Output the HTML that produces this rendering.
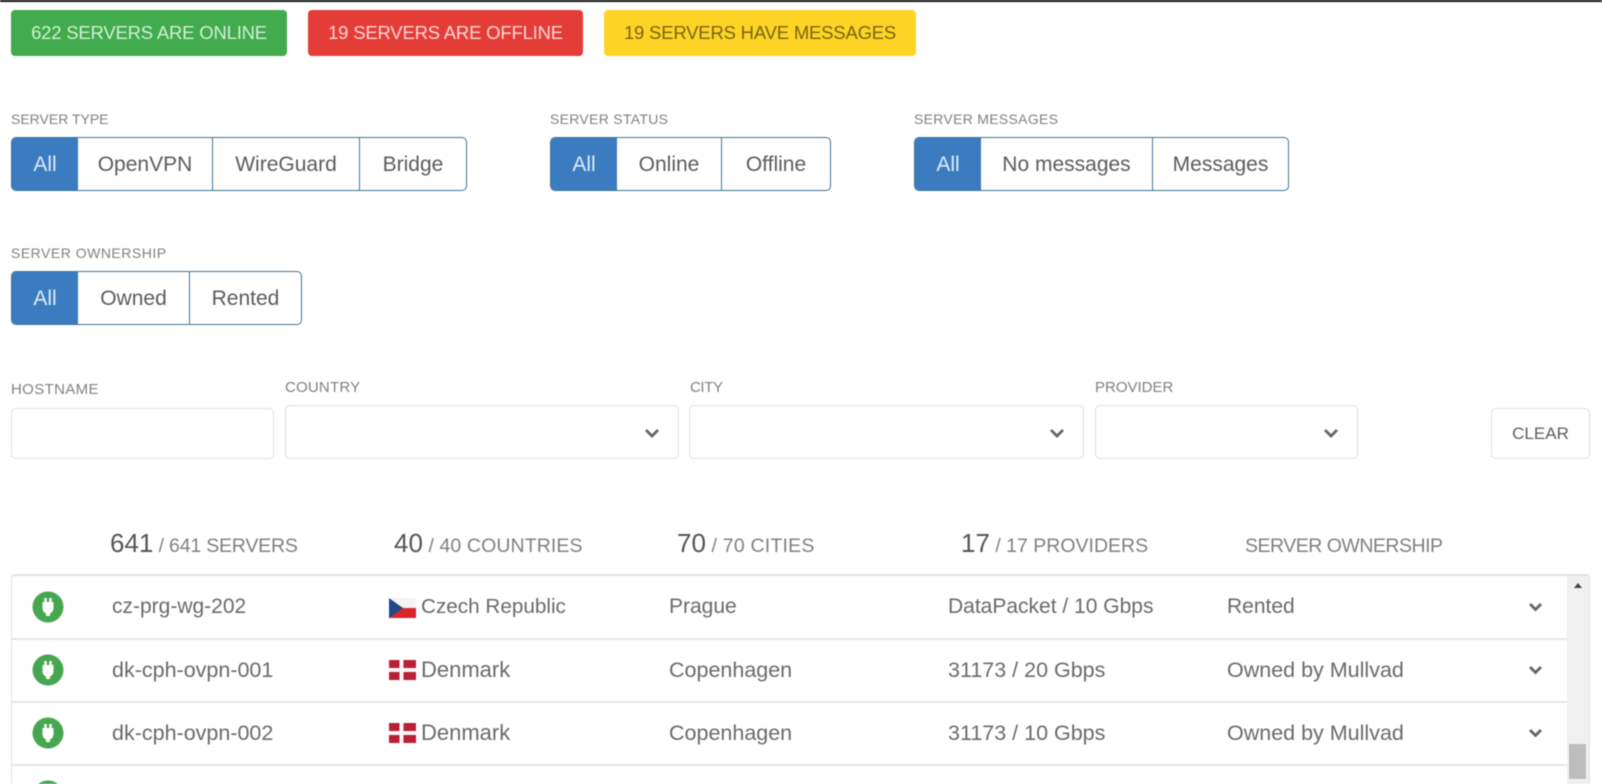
<!DOCTYPE html>
<html>
<head>
<meta charset="utf-8">
<style>
html,body{margin:0;padding:0;background:#fff;}
body{position:relative;width:1602px;height:784px;overflow:hidden;font-family:"Liberation Sans",sans-serif;color:#555;}
#w{position:absolute;left:0;top:0;width:1602px;height:784px;overflow:hidden;filter:blur(.5px);}
.a{position:absolute;white-space:nowrap;}
.b{position:absolute;top:10px;height:46px;line-height:46px;border-radius:4px;text-align:center;font-size:18.5px;letter-spacing:-.2px;}
.l{position:absolute;white-space:nowrap;font-size:14px;color:#808080;line-height:18px;}
.g{position:absolute;height:52px;border:1px solid #3f7496;border-radius:5px;box-sizing:content-box;}
.s{position:absolute;top:0;height:52px;line-height:54px;text-align:center;font-size:21px;color:#5c5c5c;border-right:1px solid #3f7496;box-sizing:border-box;}
.s:last-child{border-right:none;}
.s.on{background:#3b7cc0;color:#dfeaf5;border-radius:4px 0 0 4px;border-right:none;}
.i{position:absolute;border:1.5px solid #e0e0e0;border-radius:5px;box-sizing:border-box;background:#fff;}
.st{position:absolute;white-space:nowrap;font-size:19.5px;letter-spacing:-.2px;color:#808080;line-height:26px;}
.st b{font-weight:normal;font-size:26px;letter-spacing:0;color:#555;}
.t{position:absolute;white-space:nowrap;font-size:21.5px;line-height:26px;color:#6a6a6a;}
.r{position:absolute;left:12px;width:1555px;height:1.5px;background:#e6e6e6;}
svg{position:absolute;}
</style>
</head>
<body>
<div id="w">
<div class="a" style="left:0;top:0;width:1602px;height:2px;background:#111"></div>

<div class="b" style="left:11px;width:276px;background:#41ab4d;color:#d3efd5">622 SERVERS ARE ONLINE</div>
<div class="b" style="left:308px;width:275px;background:#e43d38;color:#fbd5d3">19 SERVERS ARE OFFLINE</div>
<div class="b" style="left:604px;width:312px;background:#fdd426;color:#7a6510">19 SERVERS HAVE MESSAGES</div>

<div class="l" style="left:11px;top:110px">SERVER TYPE</div>
<div class="g" style="left:11px;top:137px;width:454px">
<div class="s on" style="left:0;width:66px">All</div>
<div class="s" style="left:66px;width:135px">OpenVPN</div>
<div class="s" style="left:201px;width:147px">WireGuard</div>
<div class="s" style="left:348px;width:106px">Bridge</div>
</div>

<div class="l" style="left:550px;top:110px;letter-spacing:.3px">SERVER STATUS</div>
<div class="g" style="left:550px;top:137px;width:279px">
<div class="s on" style="left:0;width:66px">All</div>
<div class="s" style="left:66px;width:105px">Online</div>
<div class="s" style="left:171px;width:108px">Offline</div>
</div>

<div class="l" style="left:914px;top:110px;letter-spacing:.3px">SERVER MESSAGES</div>
<div class="g" style="left:914px;top:137px;width:373px">
<div class="s on" style="left:0;width:66px">All</div>
<div class="s" style="left:66px;width:172px">No messages</div>
<div class="s" style="left:238px;width:135px">Messages</div>
</div>

<div class="l" style="left:11px;top:244px;letter-spacing:.5px">SERVER OWNERSHIP</div>
<div class="g" style="left:11px;top:271px;width:289px">
<div class="s on" style="left:0;width:66px">All</div>
<div class="s" style="left:66px;width:112px">Owned</div>
<div class="s" style="left:178px;width:111px">Rented</div>
</div>

<div class="l" style="left:11px;top:381px;font-size:15px;letter-spacing:.35px">HOSTNAME</div>
<div class="l" style="left:285px;top:379px;font-size:15px;letter-spacing:.2px">COUNTRY</div>
<div class="l" style="left:690px;top:379px;font-size:15px;letter-spacing:-.4px">CITY</div>
<div class="l" style="left:1095px;top:379px;font-size:15px">PROVIDER</div>

<div class="i" style="left:11px;top:408px;width:263px;height:51px"></div>
<div class="i" style="left:285px;top:405px;width:394px;height:54px"></div>
<div class="i" style="left:689px;top:405px;width:395px;height:54px"></div>
<div class="i" style="left:1095px;top:405px;width:263px;height:54px"></div>
<div class="i" style="left:1491px;top:408px;width:99px;height:51px;text-align:center;line-height:50px;font-size:17px;color:#5e5e5e">CLEAR</div>

<svg style="left:644px;top:428px" width="16" height="11" viewBox="0 0 16 11"><path d="M2 2l6 6 6-6" fill="none" stroke="#666" stroke-width="2.8"/></svg>
<svg style="left:1049px;top:428px" width="16" height="11" viewBox="0 0 16 11"><path d="M2 2l6 6 6-6" fill="none" stroke="#666" stroke-width="2.8"/></svg>
<svg style="left:1323px;top:428px" width="16" height="11" viewBox="0 0 16 11"><path d="M2 2l6 6 6-6" fill="none" stroke="#666" stroke-width="2.8"/></svg>

<div class="st" style="left:110px;top:530px"><b>641</b> / 641 SERVERS</div>
<div class="st" style="left:394px;top:530px;letter-spacing:.1px"><b>40</b> / 40 COUNTRIES</div>
<div class="st" style="left:677px;top:530px;letter-spacing:.2px"><b>70</b> / 70 CITIES</div>
<div class="st" style="left:961px;top:530px;letter-spacing:0"><b>17</b> / 17 PROVIDERS</div>
<div class="st" style="left:1245px;top:533px;letter-spacing:-.5px">SERVER OWNERSHIP</div>

<div class="a" style="left:11px;top:574px;width:1579px;height:210px;border:1.5px solid #e2e2e2;border-bottom:none;border-radius:4px 4px 0 0;box-sizing:border-box;border-top-width:2px"></div>
<div class="a" style="left:1567px;top:576px;width:22px;height:208px;background:#f0f0f0"></div>
<div class="a" style="left:1569px;top:744px;width:17px;height:35px;background:#bdbdbd"></div>
<svg style="left:1572px;top:582px" width="12" height="8" viewBox="0 0 12 8"><path d="M6 1l4 5H2z" fill="#444"/></svg>

<div class="r" style="top:638px"></div>
<div class="r" style="top:701px"></div>
<div class="r" style="top:764px"></div>

<!-- row icons -->
<svg style="left:32px;top:591px" width="32" height="32" viewBox="0 0 32 32"><circle cx="16" cy="16" r="15.5" fill="#47a650"/><path d="M10.5 11h11v6c0 3-2 5-3.5 5.5V25h-4v-2.5C12.500 22 10.500 20 10.500 17z" fill="#fff"/><path d="M13.500 7v5M18.500 7v5" stroke="#fff" stroke-width="2.4"/></svg>
<svg style="left:32px;top:654px" width="32" height="32" viewBox="0 0 32 32"><circle cx="16" cy="16" r="15.5" fill="#47a650"/><path d="M10.5 11h11v6c0 3-2 5-3.5 5.5V25h-4v-2.5C12.500 22 10.500 20 10.500 17z" fill="#fff"/><path d="M13.500 7v5M18.500 7v5" stroke="#fff" stroke-width="2.4"/></svg>
<svg style="left:32px;top:717px" width="32" height="32" viewBox="0 0 32 32"><circle cx="16" cy="16" r="15.5" fill="#47a650"/><path d="M10.5 11h11v6c0 3-2 5-3.5 5.5V25h-4v-2.5C12.500 22 10.500 20 10.500 17z" fill="#fff"/><path d="M13.500 7v5M18.500 7v5" stroke="#fff" stroke-width="2.4"/></svg>
<svg style="left:32px;top:780px" width="32" height="32" viewBox="0 0 32 32"><circle cx="16" cy="16" r="15.5" fill="#47a650"/></svg>

<!-- flags -->
<svg style="left:389px;top:598px" width="27" height="20" viewBox="0 0 27 20"><rect width="27" height="10" fill="#f4f4f4"/><rect y="10" width="27" height="10" fill="#d7262c"/><path d="M0 0l14 10L0 20z" fill="#1d4a86"/></svg>
<svg style="left:389px;top:660px" width="27" height="20" viewBox="0 0 27 20"><rect width="27" height="20" fill="#b92035"/><rect x="10.5" width="4" height="20" fill="#f6f6f6"/><rect y="8" width="27" height="4" fill="#f6f6f6"/></svg>
<svg style="left:389px;top:723px" width="27" height="20" viewBox="0 0 27 20"><rect width="27" height="20" fill="#b92035"/><rect x="10.5" width="4" height="20" fill="#f6f6f6"/><rect y="8" width="27" height="4" fill="#f6f6f6"/></svg>

<div class="t" style="left:112px;top:594px;font-size:21px">cz-prg-wg-202</div>
<div class="t" style="left:421px;top:594px;font-size:20.7px">Czech Republic</div>
<div class="t" style="left:669px;top:594px;font-size:21px">Prague</div>
<div class="t" style="left:948px;top:594px;font-size:21px">DataPacket / 10 Gbps</div>
<div class="t" style="left:1227px;top:594px;font-size:21px">Rented</div>

<div class="t" style="left:112px;top:657px">dk-cph-ovpn-001</div>
<div class="t" style="left:421px;top:657px;font-size:22px">Denmark</div>
<div class="t" style="left:669px;top:657px">Copenhagen</div>
<div class="t" style="left:948px;top:657px">31173 / 20 Gbps</div>
<div class="t" style="left:1227px;top:657px">Owned by Mullvad</div>

<div class="t" style="left:112px;top:720px">dk-cph-ovpn-002</div>
<div class="t" style="left:421px;top:720px;font-size:22px">Denmark</div>
<div class="t" style="left:669px;top:720px">Copenhagen</div>
<div class="t" style="left:948px;top:720px">31173 / 10 Gbps</div>
<div class="t" style="left:1227px;top:720px">Owned by Mullvad</div>

<svg style="left:1528px;top:602px" width="15" height="10" viewBox="0 0 15 10"><path d="M2 2l5.500 5.500L13 2" fill="none" stroke="#666" stroke-width="2.8"/></svg>
<svg style="left:1528px;top:665px" width="15" height="10" viewBox="0 0 15 10"><path d="M2 2l5.500 5.500L13 2" fill="none" stroke="#666" stroke-width="2.8"/></svg>
<svg style="left:1528px;top:728px" width="15" height="10" viewBox="0 0 15 10"><path d="M2 2l5.500 5.500L13 2" fill="none" stroke="#666" stroke-width="2.8"/></svg>
</div>
</body>
</html>
